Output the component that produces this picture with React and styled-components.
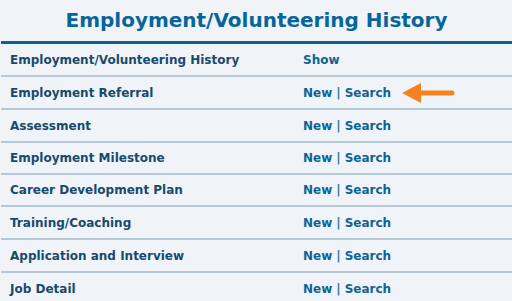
import React from "react";
import styled, { createGlobalStyle } from "styled-components";

const Global = createGlobalStyle`
  html, body { margin: 0; padding: 0; background: #f0f4f8; }
  body { font-family: "DejaVu Sans", Verdana, sans-serif; }
`;

const Page = styled.div`
  width: 512px;
  height: 301px;
  overflow: hidden;
  background: #f0f4f8;
  padding-left: 1px;
  box-sizing: border-box;
`;

const Title = styled.h1`
  margin: 0;
  height: 44px;
  box-sizing: border-box;
  padding-top: 7px;
  text-align: center;
  font-size: 20px;
  font-weight: bold;
  color: #07659a;
  border-bottom: 3px solid #0b6395;
  line-height: 26px;
`;

const Row = styled.div`
  display: grid;
  grid-template-columns: 293px 1fr;
  align-items: center;
  height: ${(p) => (p.$short ? 32 : 33)}px;
  box-sizing: border-box;
  padding-left: 9px;
  border-bottom: 2px solid #b4c8d8;
  position: relative;
`;

const Label = styled.span`
  font-size: 12px;
  font-weight: bold;
  color: #174a6c;
`;

const Links = styled.span`
  font-size: 12px;
  font-weight: bold;
  color: #0f6393;
`;

const Sep = styled.span`
  color: #2a78a8;
  margin: 0 4px;
`;

const Arrow = styled.svg`
  position: absolute;
  left: 400px;
  top: 5px;
`;

const rows = [
  { label: "Employment/Volunteering History", show: true },
  { label: "Employment Referral", arrow: true },
  { label: "Assessment" },
  { label: "Employment Milestone", short: true },
  { label: "Career Development Plan", short: true },
  { label: "Training/Coaching" },
  { label: "Application and Interview" },
  { label: "Job Detail" },
];

export default function App() {
  return (
    <Page>
      <Global />
      <Title>Employment/Volunteering History</Title>
      {rows.map((r) => (
        <Row key={r.label} $short={r.short}>
          <Label>{r.label}</Label>
          <Links>
            {r.show ? "Show" : (<>New<Sep>|</Sep>Search</>)}
          </Links>
          {r.arrow && (
            <Arrow width="56" height="22" viewBox="0 0 56 22">
              <path d="M1 11 L20 1 L20 21 Z" fill="#f6821f" />
              <line x1="18" y1="11" x2="51" y2="11" stroke="#f6821f" strokeWidth="5" strokeLinecap="round" />
            </Arrow>
          )}
        </Row>
      ))}
    </Page>
  );
}
